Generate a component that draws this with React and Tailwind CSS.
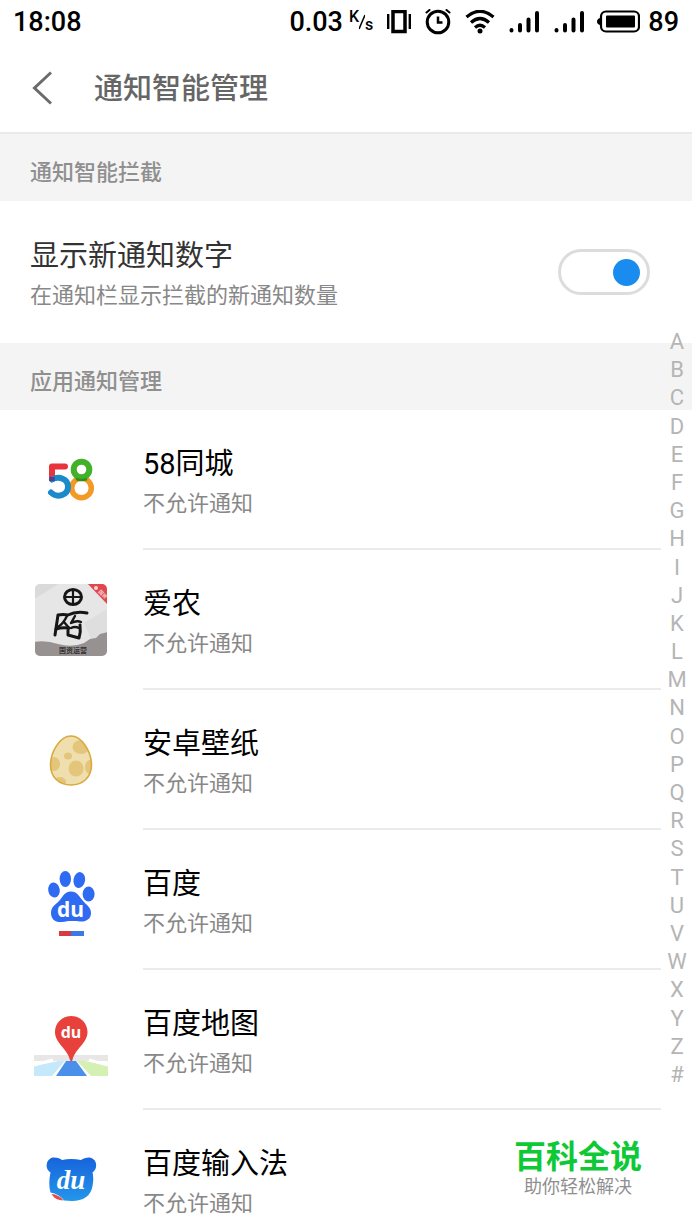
import React from 'react';

function Icon58() {
    return (
        <svg className="w-[74px] h-[74px]" viewBox="0 0 74 74" fill="none" strokeWidth="6">
            <circle cx="47.500" cy="45" r="9.800" stroke="#f39a26" strokeWidth="5.500" />
            <path d="M31 23.500H18V36" stroke="#e8343c" strokeLinecap="round" strokeLinejoin="round" />
            <path d="M18 36.500C25 32.500 34 36 34 43.500C34 52.500 23 55.500 17 49.500" stroke="#1a8acb" strokeLinecap="round" />
            <path d="M18 34V38" stroke="#5b3c86" strokeWidth="5.500" />
            <circle cx="47.500" cy="26.500" r="7.800" stroke="#43b02a" strokeWidth="6" />
            <path d="M42 36Q47.500 38 53 36" stroke="#2f8f1c" strokeWidth="2.500" />
        </svg>
    );
}

function IconAinong() {
    return (
        <svg className="w-[74px] h-[74px]" viewBox="0 0 74 74">
            <defs>
                <clipPath id="tile">
                    <rect x="1" y="1" width="72" height="72" rx="5" />
                </clipPath>
            </defs>
            <g clipPath="url(#tile)">
                <rect width="74" height="74" fill="#e6e6e6" />
                <path d="M0 0H26Q14 8 0 16Z" fill="#dadada" />
                <path d="M50 40L73 26V50L58 58Z" fill="#dedede" />
                <path d="M0 59Q12 57 24 61Q38 65 50 60L56 56L62 55L66 51L74 49V74H0Z" fill="#989191" />
                <path d="M53 0H74V22Z" fill="#e0484c" />
                <circle cx="62" cy="5" r="2" fill="#fbd5d5" />
                <text x="64" y="9" fontSize="5" fill="#fff" transform="rotate(45 64 9)" fontFamily="Noto Sans CJK SC, sans-serif">国资</text>
                <g fill="none" stroke="#161616" strokeLinecap="round" strokeLinejoin="round">
                    <ellipse cx="39" cy="14" rx="8.500" ry="7.500" strokeWidth="3" />
                    <path d="M31 14H47M39 7V21" strokeWidth="2.200" />
                    <path d="M24 32L21 52M24 32Q29 31 34 32Q42 28 53 30" strokeWidth="3" />
                    <path d="M22 46Q28 44 35 45M34 45V52L45 55Q47 49 46 42" strokeWidth="3" />
                    <path d="M33 33Q29 41 24 44M30 39L35 45M41 33L37 40Q43 37 47 39M37 45Q41 43 45 45" strokeWidth="2.400" />
                </g>
                <text x="39" y="70" textAnchor="middle" fontSize="7" fontWeight="700" fill="#333" fontFamily="Noto Sans CJK SC, sans-serif">国资运营</text>
            </g>
        </svg>
    );
}

function IconEgg() {
    return (
        <svg className="w-[74px] h-[74px]" viewBox="0 0 74 74">
            <defs>
                <clipPath id="egg">
                    <path d="M37 13C48 13 57.500 29 57.500 42C57.500 54 49 62 37 62S16.500 54 16.500 42C16.500 29 26 13 37 13Z" />
                </clipPath>
            </defs>
            <g clipPath="url(#egg)">
                <rect width="74" height="74" fill="#efdfae" />
                <g fill="#e3c67c">
                    <ellipse cx="47" cy="24" rx="8.500" ry="7" />
                    <ellipse cx="34" cy="33" rx="4" ry="3.500" />
                    <ellipse cx="42" cy="45.500" rx="7.500" ry="8" />
                    <ellipse cx="20" cy="41" rx="6" ry="7" />
                    <ellipse cx="56" cy="44" rx="5" ry="7" />
                    <ellipse cx="26" cy="59" rx="6" ry="5" />
                </g>
            </g>
            <path d="M37 13C48 13 57.500 29 57.500 42C57.500 54 49 62 37 62S16.500 54 16.500 42C16.500 29 26 13 37 13Z" fill="none" stroke="#d9a93c" strokeWidth="1.600" />
        </svg>
    );
}

function IconBaidu() {
    return (
        <svg className="w-[74px] h-[74px]" viewBox="0 0 74 74">
            <g fill="#2f6bf2">
                <ellipse cx="20" cy="27" rx="5.800" ry="7.500" transform="rotate(-8 20 27)" />
                <ellipse cx="31.300" cy="16" rx="5.700" ry="8" />
                <ellipse cx="45.300" cy="17" rx="5.800" ry="8" transform="rotate(10 45 17)" />
                <ellipse cx="54.600" cy="31" rx="6" ry="7.500" />
                <path d="M37 28.500C44 28.500 45 34 50 39C54 43 57 45 57 50C57 56 52 59 46 58.500C41 58 40 58 37 58C34 58 32 58.500 28 59C21 59.500 17 56 17 50C17 44 21 42 25 38C29 34 30 28.500 37 28.500Z" />
            </g>
            <text x="36.500" y="54" textAnchor="middle" fontSize="21" fontWeight="700" fill="#fff" fontFamily="Open Sans, sans-serif">du</text>
            <path d="M25 68H37V73H25Z" fill="#d83a42" />
            <path d="M37 68H50V73H37Z" fill="#3b78ea" />
        </svg>
    );
}

function IconMap() {
    return (
        <svg className="w-[74px] h-[74px]" viewBox="0 0 74 74">
            <path d="M0 52H74V58H0Z" fill="#e9e6e7" />
            <path d="M0 61H9L25 58H31L18 73H0Z" fill="#c5e9fb" />
            <path d="M43 58H51L66 61H74V73H57Z" fill="#d4f0b2" />
            <path d="M0 62L19 57M74 62L55 57" stroke="#fff" strokeWidth="3" />
            <path d="M32 58H42L53 73H22Z" fill="#4a8fea" />
            <path d="M37.300 13C46.500 13 53.500 20 53.500 29C53.500 40 41 46 38.500 57Q37.300 59.500 36 57C33.500 46 21 40 21 29C21 20 28 13 37.300 13Z" fill="#e8403a" />
            <text x="37" y="35" textAnchor="middle" fontSize="16" fontWeight="700" fill="#fff" fontFamily="Open Sans, sans-serif">du</text>
        </svg>
    );
}

function IconInput() {
    return (
        <svg className="w-[74px] h-[74px]" viewBox="0 0 74 74">
            <defs>
                <linearGradient id="bear" x1="0" y1="0" x2="0" y2="1">
                    <stop offset="0" stopColor="#1764dc" />
                    <stop offset="1" stopColor="#2496ea" />
                </linearGradient>
            </defs>
            <path d="M20 14.500C24 14.500 26 15.500 28 17Q37 15 47 17C49 15.500 52 14.500 55 14.500C60 15 63 19 62 24C61.500 27 60 28 58.500 29.500Q60 35 58.500 43C57 53 49 58 38 58L30 57.500Q25 51 16.500 49.500Q14 41 16.500 29.500C13 27 12 24 13 20C14 16.500 17 14.500 20 14.500Z" fill="url(#bear)" />
            <path d="M17.500 51Q25 51.500 29.500 57.500Q21 57.500 17.500 51Z" fill="#e0504e" />
            <text x="37" y="46" textAnchor="middle" fontSize="27" fontWeight="700" fontStyle="italic" fill="#fff" fontFamily="Liberation Serif, serif">du</text>
        </svg>
    );
}

function Signal() {
    return (
        <svg className="w-[31px] h-6" viewBox="0 0 31 24" stroke="#000" strokeWidth="4" strokeLinecap="round">
            <path d="M2.500 20V20.500M11 15V20.500M19.500 9.500V20.500M28 3V20.500" />
        </svg>
    );
}

function StatusBar() {
    return (
        <div className="flex h-[44px] shrink-0 items-center justify-between px-[13px] text-[27px] font-medium text-black">
            <span>18:08</span>
            <div className="flex items-center gap-3">
                <div className="flex items-center gap-[14px]">
                    <div className="flex items-center gap-[6px]">
                        <span>0.03</span>
                        <span className="flex items-center text-[16px] leading-4">
                            <span className="pb-[10px]">K</span>
                            <svg className="w-[6px] h-4" viewBox="0 0 6 16" stroke="#000" strokeWidth="1.500">
                                <path d="M6 1L0 15" />
                            </svg>
                            <span className="pt-[6px]">s</span>
                        </span>
                    </div>
                    <svg className="w-6 h-6" viewBox="0 0 24 24" fill="none" stroke="#000">
                        <path d="M1.200 4V19M22.800 4V19" strokeWidth="2.400" />
                        <rect x="6" y="1.500" width="12" height="20" strokeWidth="3.500" />
                    </svg>
                    <svg className="w-[26px] h-[26px]" viewBox="0 0 26 26" fill="none" stroke="#000" strokeWidth="3" strokeLinecap="round">
                        <circle cx="13" cy="13" r="10.800" />
                        <path d="M13 7.500V13.500H17.500" strokeWidth="2.500" strokeLinecap="butt" />
                        <path d="M1.500 3.500L4.500 1M24.500 3.500L21.500 1" strokeWidth="2" />
                    </svg>
                    <svg className="w-[30px] h-6" viewBox="0 0 30 24" fill="none" stroke="#000" strokeWidth="3.200">
                        <path d="M1.500 7Q15 -4.500 28.500 7M6 12.500Q15 4.500 24 12.500M10 17.500Q15 13 20 17.500" />
                        <circle cx="15" cy="21" r="2.500" fill="#000" stroke="none" />
                    </svg>
                    <Signal />
                    <Signal />
                </div>
                <div className="flex items-center gap-2">
                    <svg className="w-[43px] h-6" viewBox="0 0 43 24">
                        <rect x="4" y="1.500" width="38" height="20" rx="5" fill="none" stroke="#000" strokeWidth="2.200" />
                        <rect x="9" y="5.500" width="29" height="12" rx="1" />
                        <path d="M3 8V15Q0 14 0 11.500T3 8Z" />
                    </svg>
                    <span>89</span>
                </div>
            </div>
        </div>
    );
}

const apps = [
    { name: '58同城', Icon: Icon58 },
    { name: '爱农', Icon: IconAinong },
    { name: '安卓壁纸', Icon: IconEgg },
    { name: '百度', Icon: IconBaidu },
    { name: '百度地图', Icon: IconMap },
    { name: '百度输入法', Icon: IconInput },
];

const letters = 'ABCDEFGHIJKLMNOPQRSTUVWXYZ#'.split('');

export default function App() {
    return (
        <div className="relative flex h-screen flex-col overflow-hidden bg-white font-['Roboto','Noto_Sans_CJK_SC',sans-serif]">
            <StatusBar />

            <header className="flex h-[90px] shrink-0 items-center gap-[42px] border-b-2 border-[#e9e9e9] pl-[32px]">
                <button type="button" aria-label="返回">
                    <svg className="w-5 h-[34px]" viewBox="0 0 20 34" fill="none" stroke="#6b6b6b" strokeWidth="3">
                        <path d="M19 1.500L2.500 17L19 32.500" />
                    </svg>
                </button>
                <h1 className="pt-1 text-[29px] font-medium text-[#666]">通知智能管理</h1>
            </header>

            <main className="min-h-0 flex-1 overflow-hidden">
                <h2 className="flex h-[67px] items-center bg-[#f4f4f4] pl-[30px] pt-[10px] text-[22px] font-medium text-[#8f8f8f]">
                    通知智能拦截
                </h2>

                <div className="flex h-[142px] items-center justify-between pl-[30px] pr-[42px]">
                    <label htmlFor="show-count" className="pt-2">
                        <span className="block text-[29px] leading-10 text-[#333]">显示新通知数字</span>
                        <span className="block text-[22px] leading-10 text-[#888]">在通知栏显示拦截的新通知数量</span>
                    </label>
                    <input
                        id="show-count"
                        type="checkbox"
                        role="switch"
                        defaultChecked
                        className="flex h-[46px] w-[92px] appearance-none items-center rounded-full border-3 border-[#dcdcdc] px-[7px] before:size-[27px] before:rounded-full before:bg-[#bbb] checked:justify-end checked:before:bg-[#1a8cf0]"
                    />
                </div>

                <h2 className="flex h-[67px] items-center bg-[#f4f4f4] pl-[30px] pt-[10px] text-[22px] font-medium text-[#8f8f8f]">
                    应用通知管理
                </h2>

                <ul>
                    {apps.map(({ name, Icon }) => (
                        <li key={name} className="flex h-[140px] items-center gap-[35px] pl-[34px] pr-[31px]">
                            <Icon />
                            <div className="flex h-full flex-1 flex-col justify-center border-b-2 border-[#ebebeb] pt-[10px]">
                                <h3 className="text-[29px] leading-10 text-black">{name}</h3>
                                <p className="text-[22px] leading-10 text-[#888]">不允许通知</p>
                            </div>
                        </li>
                    ))}
                </ul>
            </main>

            {/* alphabet index over the list */}
            <nav className="absolute right-0 top-[328px] bottom-[141px] flex w-[30px] flex-col items-center justify-between text-[22px] leading-7 text-[#b5b5b5]">
                {letters.map((letter) => (
                    <a key={letter} href={`#${letter}`}>{letter}</a>
                ))}
            </nav>

            <div className="absolute bottom-[31px] right-[50px] text-center">
                <p className="text-[32px] font-bold leading-9 text-[#0dc935]">百科全说</p>
                <p className="text-[18px] leading-6 text-[#8f8f8f]">助你轻松解决</p>
            </div>
        </div>
    );
}
